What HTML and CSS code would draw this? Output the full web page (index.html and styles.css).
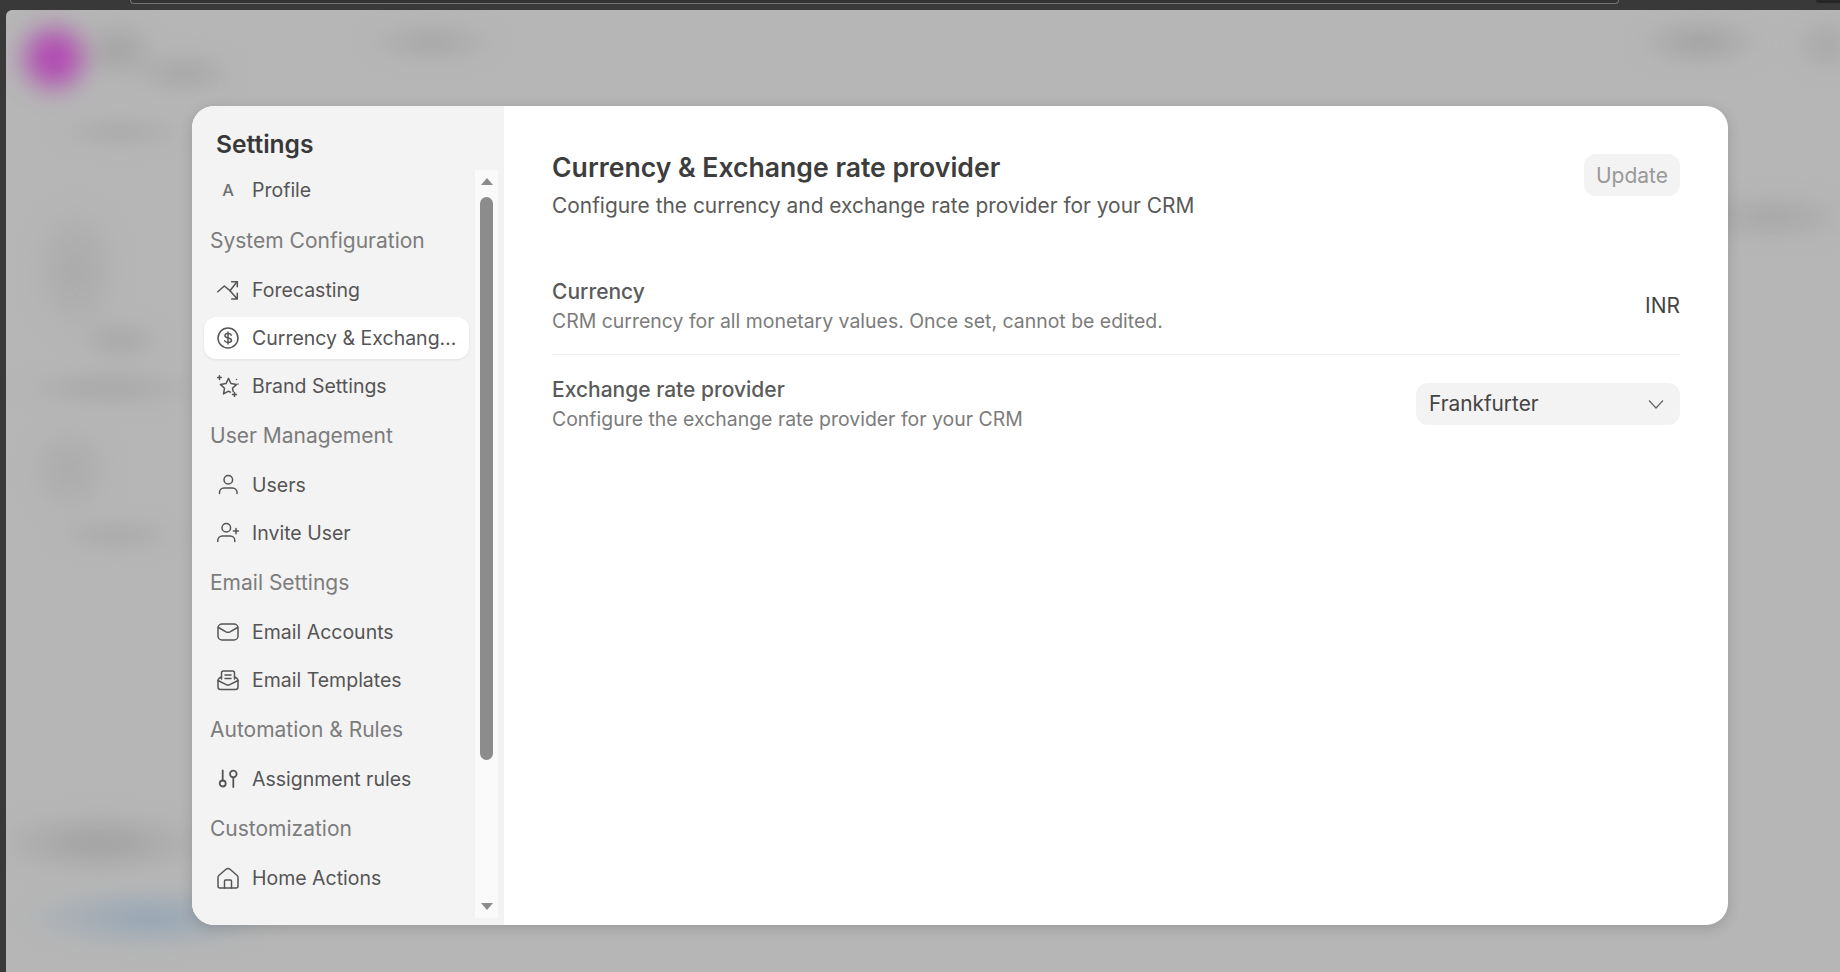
FILE: index.html
```html
<!DOCTYPE html>
<html lang="en">

<head>
    <meta charset="UTF-8">
    <meta name="viewport" content="width=device-width, initial-scale=1.0">
    <title>Settings - CRM</title>
    <link rel="stylesheet" href="styles.css">
</head>

<body>
    <div class="window-top">
        <div class="address-bar"></div>
        <div class="top-corner"></div>
    </div>

    <div class="backdrop">
        <div class="modal">
            <aside class="sidebar">
                <div class="sidebar-main">
                    <h2 class="sidebar-title">Settings</h2>
                    <nav class="settings-nav">
                        <a class="nav-item profile-item">
                            <span class="nav-icon avatar">A</span>
                            <span class="nav-label">Profile</span>
                        </a>

                        <div class="nav-heading">System Configuration</div>
                        <a class="nav-item">
                            <svg class="nav-icon" viewBox="0 0 22 22">
                                <path d="M.8 12.700 7.300 7 13 11.700 20 2.700"/>
                                <path d="M14.700 2.700h5.600v5"/>
                                <path d="m13 11.700 7.300 8.300M20.300 14.300V20h-5.600"/>
                            </svg>
                            <span class="nav-label">Forecasting</span>
                        </a>
                        <a class="nav-item active">
                            <svg class="nav-icon" viewBox="0 0 22 22">
                                <circle cx="11" cy="11" r="10"/>
                                <path d="M14.300 8.200c-.5-1-1.700-1.600-3.200-1.600-1.800 0-3.200.9-3.200 2.200 0 3 6.600 1.500 6.600 4.400 0 1.300-1.500 2.200-3.400 2.200-1.600 0-2.900-.6-3.400-1.700"/>
                                <path d="M11 5v12"/>
                            </svg>
                            <span class="nav-label">Currency &amp; Exchang…</span>
                        </a>
                        <a class="nav-item">
                            <svg class="nav-icon" viewBox="0 0 22 22">
                                <path d="M11.500 3.500 14 8.600l5.600.8-4.100 3.900.7 3.300"/>
                                <path d="M13.500 17.100l-2-.9-5 2.700 1-5.600-4.100-3.900L9 8.600l2.500-5.100"/>
                                <path d="M2.500 .8v3.600M.7 2.600h3.600M17.500 17.500v4M15.500 19.500h4M19.500 4.500v.1M21 9v.1"/>
                            </svg>
                            <span class="nav-label">Brand Settings</span>
                        </a>

                        <div class="nav-heading">User Management</div>
                        <a class="nav-item">
                            <svg class="nav-icon" viewBox="0 0 22 22">
                                <circle cx="11.300" cy="5.800" r="4.300"/>
                                <path d="M2.500 19.500v-1c0-2.500 2-4.500 4.500-4.500h8.500c2.500 0 4.500 2 4.500 4.500v1"/>
                            </svg>
                            <span class="nav-label">Users</span>
                        </a>
                        <a class="nav-item">
                            <svg class="nav-icon" viewBox="0 0 22 22">
                                <circle cx="9.300" cy="5.800" r="4.300"/>
                                <path d="M.8 19.500v-1c0-2.500 2-4.500 4.500-4.500h8c2.500 0 4.500 2 4.500 4.500v1"/>
                                <path d="M19 6.500v5.200M16.400 9.100h5.200"/>
                            </svg>
                            <span class="nav-label">Invite User</span>
                        </a>

                        <div class="nav-heading">Email Settings</div>
                        <a class="nav-item">
                            <svg class="nav-icon" viewBox="0 0 22 22">
                                <rect x="1" y="3" width="20" height="16" rx="4"/>
                                <path d="M1.500 6.500 9 10.800c1.300.7 2.700.7 4 0l7.500-4.300"/>
                            </svg>
                            <span class="nav-label">Email Accounts</span>
                        </a>
                        <a class="nav-item">
                            <svg class="nav-icon" viewBox="0 0 22 22">
                                <path d="M4.500 10V4c0-1.100.9-2 2-2h9c1.100 0 2 .9 2 2v6"/>
                                <path d="M8 6h6M8 9.500h6"/>
                                <path d="M1 11.500c0-.8.3-1.500 1-2l2.500-1.500M21 11.500c0-.8-.3-1.500-1-2L17.500 8"/>
                                <path d="M1 11.500V18c0 1.400 1.100 2.500 2.500 2.500h15c1.400 0 2.500-1.100 2.500-2.500v-6.500l-8.700 4.300c-.8.4-1.800.4-2.600 0z"/>
                            </svg>
                            <span class="nav-label">Email Templates</span>
                        </a>

                        <div class="nav-heading">Automation &amp; Rules</div>
                        <a class="nav-item">
                            <svg class="nav-icon thick" viewBox="0 0 22 22">
                                <circle cx="5.700" cy="15.500" r="3"/>
                                <circle cx="16.300" cy="6" r="3.300"/>
                                <path d="M5.700 2.500v10M16.300 9.300v9.700"/>
                            </svg>
                            <span class="nav-label">Assignment rules</span>
                        </a>

                        <div class="nav-heading">Customization</div>
                        <a class="nav-item">
                            <svg class="nav-icon" viewBox="0 0 22 22">
                                <path d="M1 10.500c0-.9.400-1.700 1.100-2.300L9 2.300c1.200-1 2.900-1 4 0l6.900 5.900c.7.600 1.100 1.400 1.100 2.300V19c0 1.100-.9 2-2 2H3c-1.100 0-2-.9-2-2z"/>
                                <path d="M7.500 21v-7c0-.6.400-1 1-1h5c.6 0 1 .4 1 1v7"/>
                            </svg>
                            <span class="nav-label">Home Actions</span>
                        </a>
                    </nav>
                </div>

                <div class="scrollbar">
                    <span class="arrow-up"></span>
                    <span class="thumb"></span>
                    <span class="arrow-down"></span>
                </div>
            </aside>

            <main class="content">
                <div class="content-header">
                    <div>
                        <h1>Currency &amp; Exchange rate provider</h1>
                        <p class="subtitle">Configure the currency and exchange rate provider for your CRM</p>
                    </div>
                    <button class="update-btn" disabled>Update</button>
                </div>

                <div class="field-row divided">
                    <div>
                        <div class="field-label">Currency</div>
                        <div class="field-desc">CRM currency for all monetary values. Once set, cannot be edited.</div>
                    </div>
                    <div class="field-value">INR</div>
                </div>

                <div class="field-row">
                    <div>
                        <div class="field-label">Exchange rate provider</div>
                        <div class="field-desc">Configure the exchange rate provider for your CRM</div>
                    </div>
                    <div class="select-box">
                        <span>Frankfurter</span>
                        <svg class="chevron" viewBox="0 0 16 16">
                            <path d="m1 4.500 7 7.500 7-7.500"/>
                        </svg>
                    </div>
                </div>
            </main>
        </div>
    </div>
</body>

</html>
```

FILE: styles.css
```css
/* Reset */
* {
    margin: 0;
    padding: 0;
    box-sizing: border-box;
}

html,
body {
    height: 100%;
    overflow: hidden;
}

body {
    font-family: 'Inter', 'Liberation Sans', sans-serif;
    color: #383838;
    background-color: #393939;
    display: flex;
    flex-direction: column;
}

.window-top {
    height: 10px;
    flex-shrink: 0;
    display: flex;
    justify-content: space-between;
    padding-left: 130px;
}

.address-bar {
    width: 1489px;
    height: 4px;
    border: 1px solid #747474;
    border-top: none;
    border-radius: 0 0 12px 12px;
    background: #333;
}

.top-corner {
    width: 24px;
    height: 3px;
    border-bottom-left-radius: 8px;
    background: #262626;
}

/* Blurred app behind the dialog */
.backdrop {
    position: relative;
    flex: 1;
    margin-left: 6px;
    border-top-left-radius: 6px;
    padding: 96px 112px 0 186px;
    overflow: hidden;
    background-color: #b6b6b6;
}

.backdrop::before {
    content: "";
    position: absolute;
    inset: 0;
    filter: blur(9px);
    background-image:
        radial-gradient(ellipse 44px 44px at 48px 48px, #b048b1 0%, rgba(176, 72, 177, 0.9) 35%, rgba(176, 72, 177, 0.35) 70%, rgba(176, 72, 177, 0) 100%),
        radial-gradient(ellipse 40px 32px at 113px 40px, #a2a2a2 0%, rgba(162, 162, 162, 0) 100%),
        radial-gradient(ellipse 55px 22px at 178px 63px, #a4a4a4 0%, rgba(164, 164, 164, 0) 100%),
        radial-gradient(ellipse 70px 20px at 426px 32px, #a4a4a4 0%, rgba(164, 164, 164, 0) 100%),
        radial-gradient(ellipse 65px 24px at 1694px 32px, #a0a0a0 0%, rgba(160, 160, 160, 0) 100%),
        radial-gradient(ellipse 45px 28px at 1829px 35px, #a4a4a4 0%, rgba(164, 164, 164, 0) 100%),
        radial-gradient(ellipse 85px 24px at 1767px 207px, #a5a5a5 0%, rgba(165, 165, 165, 0) 100%),
        radial-gradient(ellipse 70px 14px at 115px 122px, #a5a5a5 0%, rgba(165, 165, 165, 0) 100%),
        radial-gradient(ellipse 48px 70px at 70px 260px, #a9a9a9 0%, rgba(169, 169, 169, 0) 100%),
        radial-gradient(ellipse 45px 20px at 114px 330px, #a4a4a4 0%, rgba(164, 164, 164, 0) 100%),
        radial-gradient(ellipse 95px 18px at 104px 378px, #a4a4a4 0%, rgba(164, 164, 164, 0) 100%),
        radial-gradient(ellipse 45px 50px at 64px 460px, #aaa 0%, rgba(170, 170, 170, 0) 100%),
        radial-gradient(ellipse 65px 16px at 110px 525px, #a5a5a5 0%, rgba(165, 165, 165, 0) 100%),
        radial-gradient(ellipse 110px 32px at 94px 833px, #a0a0a0 0%, rgba(160, 160, 160, 0) 100%),
        radial-gradient(ellipse 130px 30px at 144px 908px, #93a5b5 0%, rgba(147, 165, 181, 0) 100%);
}

.modal {
    position: relative;
    display: flex;
    height: 819px;
    background: white;
    border-radius: 22px;
    overflow: hidden;
    box-shadow: 0 3px 14px rgba(0, 0, 0, 0.16);
}

/* Sidebar */
.sidebar {
    width: 312px;
    flex-shrink: 0;
    display: flex;
    background-color: #f3f3f3;
}

.sidebar-main {
    width: 283px;
    padding: 24px 0 0 12px;
}

.sidebar-title {
    font-size: 24.6px;
    font-weight: 600;
    line-height: 28px;
    margin-left: 12px;
    margin-bottom: 11px;
    color: #383838;
}

.settings-nav {
    width: 265px;
}

.nav-item {
    display: flex;
    align-items: center;
    gap: 13px;
    height: 42px;
    margin-bottom: 6px;
    padding: 0 12px 0 13px;
    border-radius: 12px;
    font-size: 19.5px;
    color: #555;
}

.profile-item {
    margin-bottom: 7px;
}

.nav-item.active {
    background: white;
    box-shadow: 0 1px 3px rgba(0, 0, 0, 0.08);
}

.nav-label {
    white-space: nowrap;
}

.nav-icon {
    width: 22px;
    height: 22px;
    flex-shrink: 0;
    fill: none;
    stroke: #555;
    stroke-width: 1.5;
    stroke-linecap: round;
    stroke-linejoin: round;
}

.nav-icon.thick {
    stroke-width: 1.8;
}

.avatar {
    font-size: 16.5px;
    font-weight: 500;
    line-height: 22px;
    text-align: center;
    color: #707070;
}

.nav-heading {
    height: 44px;
    margin-bottom: 7px;
    padding-left: 6px;
    font-size: 21px;
    line-height: 45px;
    color: #7c7c7c;
}

.scrollbar {
    width: 23px;
    height: 748px;
    margin-top: 64px;
    padding: 8px 5px;
    display: flex;
    flex-direction: column;
    align-items: center;
    background: #fafafa;
}

.thumb {
    width: 13px;
    height: 563px;
    margin: 12px 0 auto;
    border-radius: 7px;
    background: #8c8c8c;
}

.arrow-up,
.arrow-down {
    width: 0;
    height: 0;
    border-left: 6px solid transparent;
    border-right: 6px solid transparent;
}

.arrow-up {
    border-bottom: 7px solid #8c8c8c;
}

.arrow-down {
    border-top: 7px solid #8c8c8c;
}

/* Main panel */
.content {
    flex: 1;
    padding: 47px 48px 0;
}

.content-header {
    display: flex;
    justify-content: space-between;
    align-items: flex-start;
    margin-top: 1px;
    margin-bottom: 44px;
}

h1 {
    font-size: 26.6px;
    font-weight: 600;
    line-height: 26px;
    margin-bottom: 12px;
    color: #3d3d3d;
}

.subtitle {
    font-size: 20.9px;
    line-height: 28px;
    color: #5a5a5a;
}

.update-btn {
    width: 96px;
    height: 42px;
    border: none;
    border-radius: 12px;
    background: #f3f3f3;
    font-family: inherit;
    font-size: 21px;
    color: #999;
}

.field-row {
    display: flex;
    justify-content: space-between;
    align-items: center;
    padding: 21px 0 17px;
}

.field-row.divided {
    padding: 14px 0 19px;
    border-bottom: 1px solid #ededed;
}

.field-label {
    font-size: 21px;
    font-weight: 500;
    line-height: 28px;
    color: #5a5a5a;
}

.field-desc {
    margin-top: 1px;
    font-size: 19.45px;
    line-height: 28px;
    color: #7c7c7c;
}

.field-value {
    margin-bottom: 2px;
    font-size: 21px;
    color: #444;
}

.select-box {
    width: 264px;
    height: 42px;
    margin-bottom: 2px;
    display: flex;
    align-items: center;
    justify-content: space-between;
    padding: 0 16px 0 13px;
    border-radius: 12px;
    background: #f3f3f3;
    font-size: 20.8px;
    color: #444;
}

.chevron {
    width: 16px;
    height: 16px;
    fill: none;
    stroke: #666;
    stroke-width: 1.2;
}
```
